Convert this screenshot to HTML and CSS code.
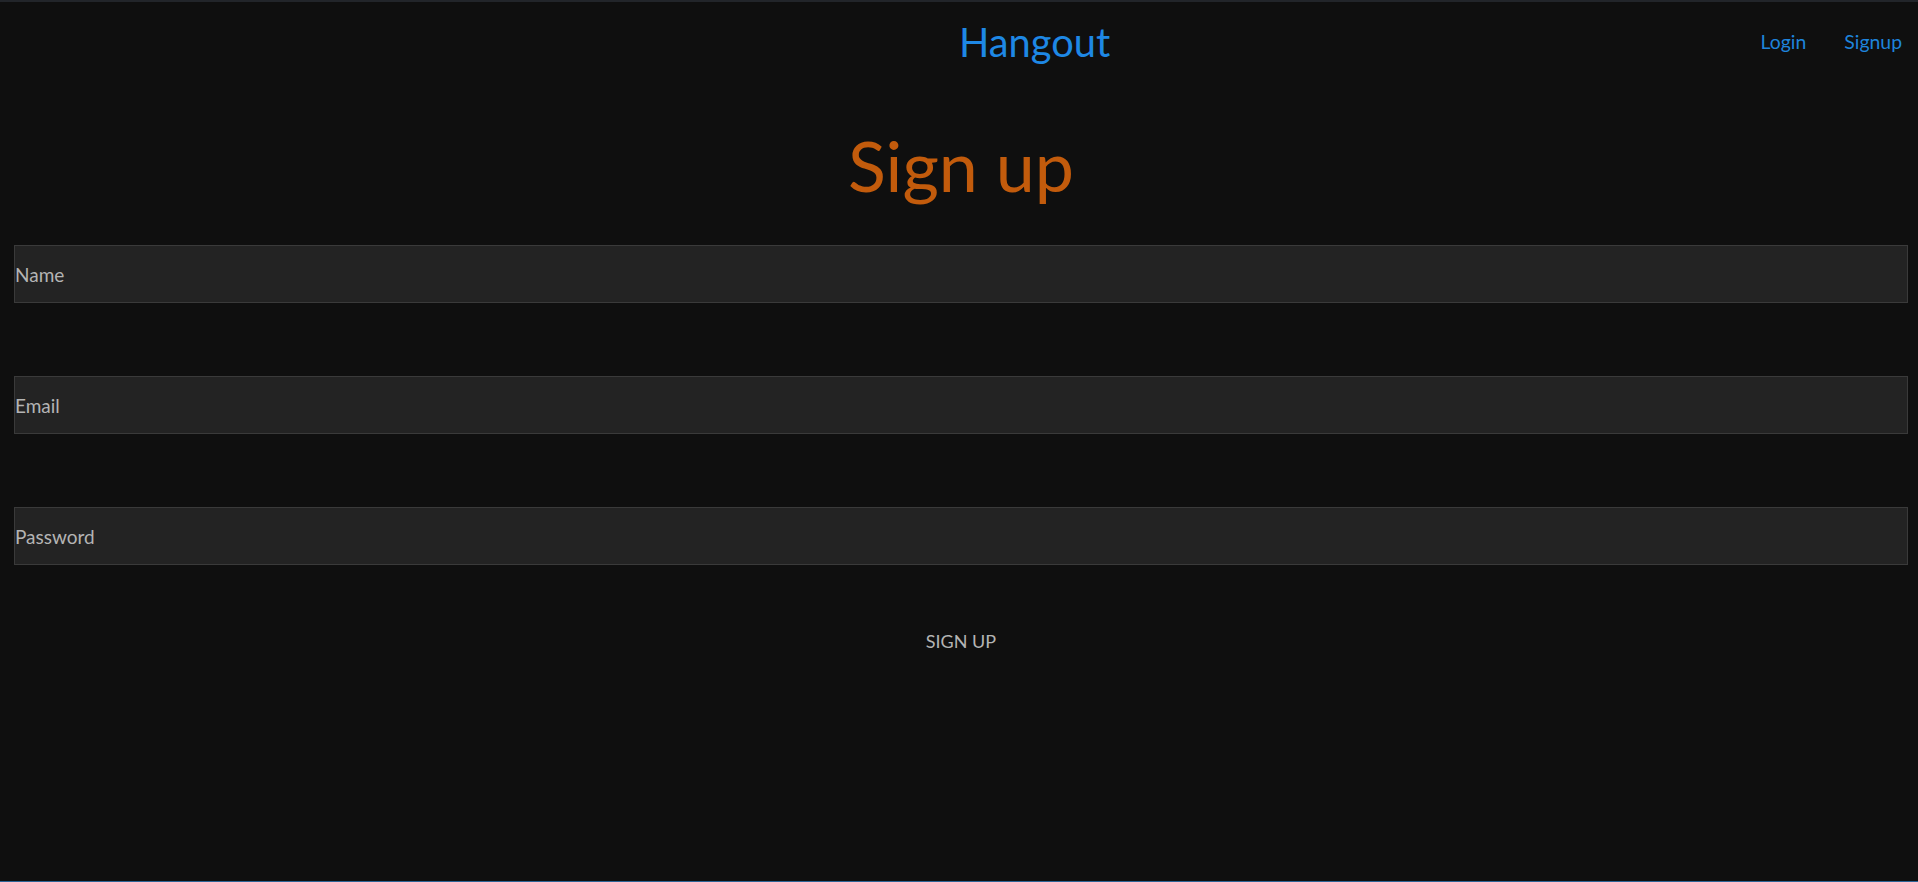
FILE: index.html
```html
<!DOCTYPE html>
<html lang="en">
<head>
<meta charset="utf-8">
<title>Hangout - Sign up</title>
<link rel="stylesheet" href="styles.css">
</head>
<body>
<div class="page">
  <header class="navbar">
    <div class="spacer"></div>
    <a class="brand" href="#">Hangout</a>
    <nav class="links">
      <a href="#">Login</a>
      <a href="#">Signup</a>
    </nav>
  </header>
  <main class="content">
    <h2 class="title">Sign up</h2>
    <form class="form">
      <input class="field" type="text" placeholder="Name">
      <input class="field" type="email" placeholder="Email">
      <input class="field" type="password" placeholder="Password">
      <button class="submit" type="button">SIGN UP</button>
    </form>
  </main>
</div>
</body>
</html>
```

FILE: styles.css
```css
* { box-sizing: border-box; }
html, body {
  margin: 0;
  padding: 0;
  background: #0f0f0f;
}
body {
  font-family: Lato, "Liberation Sans", sans-serif;
  color: #b4b4b4;
}
.page {
  min-height: 100vh;
  border-top: 2px solid #22252a;
  border-bottom: 1px solid #2d6496;
  display: flex;
  flex-direction: column;
}
.navbar {
  display: flex;
  align-items: center;
  height: 80px;
  line-height: 80px;
}
.spacer {
  flex: 0 0 50%;
}
.brand {
  color: #1e88e5;
  text-decoration: none;
  font-size: 39.8px;
}
.links {
  margin-left: auto;
  display: flex;
}
.links a {
  color: #1e84dc;
  text-decoration: none;
  font-size: 19.4px;
  padding: 0 20px 0 18px;
}
.links a:last-child {
  padding-right: 16px;
}
.content {
  padding: 0 10px 0 14px;
}
.title {
  margin: 44px 0 41px;
  text-align: center;
  font-weight: 400;
  font-size: 70px;
  line-height: 78px;
  color: #c25b0c;
}
.form {
  display: flex;
  flex-direction: column;
  align-items: stretch;
  gap: 73px;
}
.field {
  display: block;
  width: 100%;
  height: 58px;
  margin: 0;
  padding: 0;
  background: #232323;
  border: 1px solid #3a3a3a;
  font-family: Lato, "Liberation Sans", sans-serif;
  font-size: 19px;
  color: #b4b4b4;
  outline: none;
}
.field::placeholder {
  color: #b4b4b4;
  opacity: 1;
}
.submit {
  align-self: center;
  margin-top: -19px;
  height: 45px;
  line-height: 45px;
  padding: 0 20px;
  background: transparent;
  border: none;
  font-family: Lato, "Liberation Sans", sans-serif;
  font-size: 18px;
  color: #b4b4b4;
  cursor: pointer;
}
```
